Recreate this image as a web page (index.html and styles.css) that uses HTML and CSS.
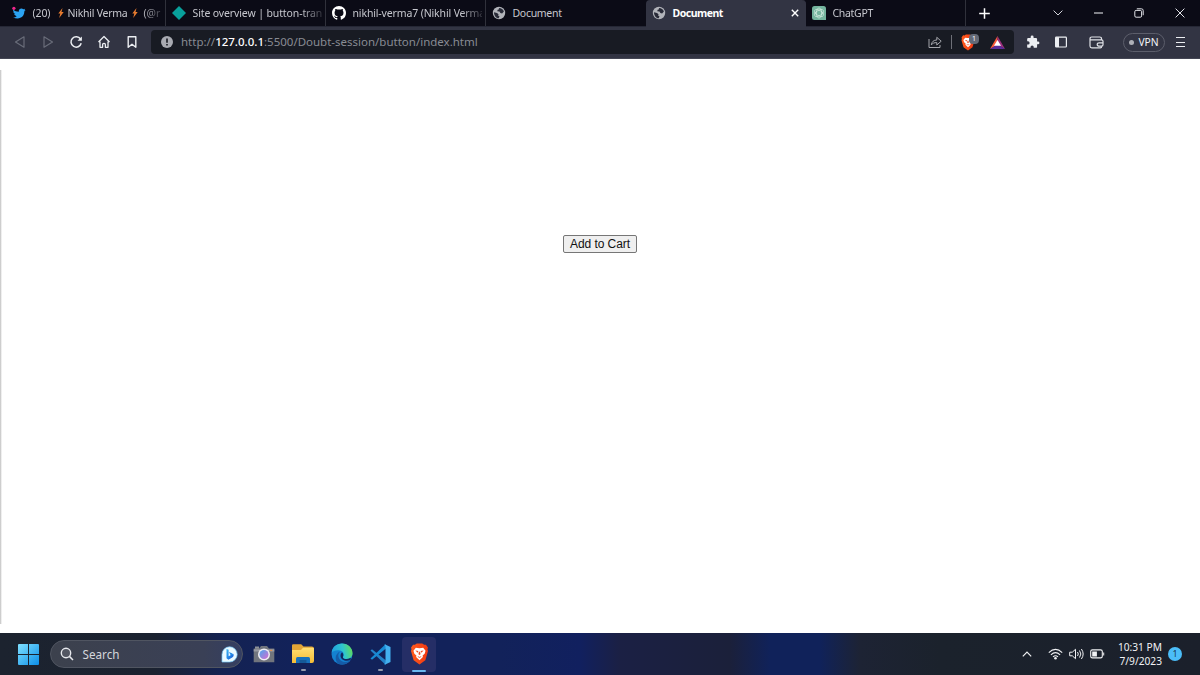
FILE: index.html
```html
<!DOCTYPE html>
<html lang="en">
<head>
<meta charset="utf-8">
<title>Document</title>
<link rel="stylesheet" href="styles.css">
</head>
<body>
<svg class="defs" width="0" height="0">
  <defs>
    <linearGradient id="orange" x1="0" y1="0" x2="1" y2="0"><stop offset="0" stop-color="#ff5a1c"/><stop offset="1" stop-color="#f03812"/></linearGradient>
    <linearGradient id="win" x1="0" y1="0" x2="1" y2="1"><stop offset="0" stop-color="#7fe0ff"/><stop offset="1" stop-color="#0c8ee8"/></linearGradient>
    <linearGradient id="edgeg" x1="0" y1=".5" x2="1" y2=".3"><stop offset="0" stop-color="#1f9fe0"/><stop offset=".55" stop-color="#2ec5cf"/><stop offset="1" stop-color="#62dc55"/></linearGradient>
    <linearGradient id="folder" x1="0" y1="0" x2="0" y2="1"><stop offset="0" stop-color="#ffdf72"/><stop offset="1" stop-color="#f5bc35"/></linearGradient>
    <linearGradient id="lens" x1="0" y1="0" x2="1" y2="1"><stop offset="0" stop-color="#4ba8ee"/><stop offset="1" stop-color="#d86bd0"/></linearGradient>
    <linearGradient id="bing" x1="0" y1="0" x2="1" y2="1"><stop offset="0" stop-color="#38b7f5"/><stop offset="1" stop-color="#1558d6"/></linearGradient>
    <symbol id="globe" viewBox="0 0 14 14"><circle cx="7" cy="7" r="6.200" fill="#b2b4ba"/><path d="M2 6.200l3 .8 1.500 1.300-.3 1.500 1.300.5-.8 2C3.900 12 2 9.500 2 6.200zM6.800 1.900c2.300-.1 4.400 1.300 5.100 3.500l-1.800 2-1.700-.3-.9-1.600-2.200-.2.300-1.600 1.500-.4z" fill="#292b38"/></symbol>
    <symbol id="brave" viewBox="0 0 20 24"><path d="M5 2 7 .5h6L15 2l2-.2L19.200 5l-.5 2 .6 1.800-2.900 10.100L10 23.500 3.600 18.900.7 8.800 1.300 7 .8 5 3 1.800z" fill="url(#orange)"/><path d="M6 5.200 10 5.700l4-.5 2.600 3.300-1 3.200-2.200 1.900.3 1.600L10 18.700l-3.700-3.500.3-1.600-2.200-1.900-1-3.200z" fill="#fff"/><path d="M5.500 8.300l3.300.5-.8 1.700zM14.500 8.300l-3.300.5.8 1.700zM7.800 14.200l2.200 1.100 2.200-1.100-.8 1.300-1.400.6-1.400-.6zM9.300 9.500h1.400l.4 2.700-1.100.8-1.100-.8z" fill="#f04a20"/></symbol>
  </defs>
</svg>
<div class="screen">
  <header class="tabs">
    <div class="tab">
      <svg class="fav" viewBox="0 0 14 14"><path d="M1 3.200C2.800 5 4.500 5.700 6.800 5.700 6.500 2.800 9.500 1.600 11.400 3.300l1.800-.5-.9 1.500 1.300-.2-1.300 1.500C12.300 11 7.500 14.200 1 11.400c1.600 0 2.800-.3 3.700-1.200-1.300-.3-2.200-1-2.500-2.100h1.200C2 7.500 1.300 6.500 1.200 5.300l1 .2C1.100 4.800.7 4.100 1 3.200z" fill="#2ba3f2"/><circle cx="1.900" cy="2.300" r="1.600" fill="#f0268c"/></svg>
      <span class="title t1"><span class="num">(20)</span><svg class="bolt" viewBox="0 0 6 10"><path d="M4.500 0 .3 5.500h2L1.200 10l4.500-6H3.500z" fill="#e77b2f"/></svg><span class="name">Nikhil Verma</span><svg class="bolt" viewBox="0 0 6 10"><path d="M4.500 0 .3 5.500h2L1.200 10l4.500-6H3.500z" fill="#e77b2f"/></svg><span class="handle">(@r</span></span>
    </div>
    <div class="tab"><svg class="fav" viewBox="0 0 14 14"><path d="M7 0l7 7-7 7-7-7z" fill="#08a09b"/></svg><span class="title t2">Site overview | button-trans</span></div>
    <div class="tab"><svg class="fav" viewBox="0 0 16 16"><path fill="#fff" d="M8 0C3.580 0 0 3.580 0 8c0 3.540 2.290 6.530 5.470 7.590.4.070.55-.17.55-.38v-1.490c-2.230.48-2.690-.95-2.690-.95-.36-.92-.9-1.170-.9-1.170-.72-.5.060-.48.060-.48.800.050 1.230.820 1.230.820.720 1.230 1.880.870 2.340.660.070-.52.280-.87.500-1.070-1.780-.2-3.640-.89-3.640-3.950 0-.87.310-1.590.820-2.150-.08-.2-.36-1.020.080-2.120 0 0 .67-.21 2.200.820a7.600 7.600 0 0 1 4 0c1.530-1.040 2.200-.82 2.200-.82.440 1.100.160 1.920.080 2.120.510.560.820 1.270.820 2.150 0 3.070-1.870 3.750-3.650 3.950.290.250.540.730.540 1.480v2.200c0 .21.150.46.550.38A8 8 0 0 0 16 8c0-4.420-3.580-8-8-8z"/></svg><span class="title t3">nikhil-verma7 (Nikhil Verma</span></div>
    <div class="tab plain"><svg class="fav"><use href="#globe"/></svg><span class="title t4">Document</span></div>
    <div class="tab active"><svg class="fav"><use href="#globe"/></svg><span class="title t5">Document</span><svg class="x" viewBox="0 0 8 8"><path d="M.8.800l6.400 6.400M7.200.8.8 7.200" stroke="#fff" stroke-width="1.400"/></svg></div>
    <div class="tab"><svg class="fav" viewBox="0 0 14 14"><path d="M2.500 0h9Q14 0 14 2.500V14H2.500Q0 14 0 11.500v-9Q0 0 2.500 0z" fill="#74b49e"/><g fill="none" stroke="#dff3e9" stroke-width=".6"><ellipse cx="7" cy="7" rx="2.600" ry="5"/><ellipse cx="7" cy="7" rx="2.600" ry="5" transform="rotate(60 7 7)"/><ellipse cx="7" cy="7" rx="2.600" ry="5" transform="rotate(120 7 7)"/></g></svg><span class="title t6">ChatGPT</span></div>
    <div class="plus"><svg width="11" height="11" viewBox="0 0 11 11"><path d="M5.500.2v10.600M.2 5.500h10.600" stroke="#fff" stroke-width="1.500"/></svg></div>
    <div class="controls">
      <span><svg width="10" height="6" viewBox="0 0 10 6"><path d="M.6.600 5 5 9.400.6" fill="none" stroke="#d5d6dc"/></svg></span>
      <span><svg width="9" height="2" viewBox="0 0 9 2"><path d="M0 1h9" stroke="#e2e3e8" stroke-width="1.100"/></svg></span>
      <span><svg width="10" height="10" viewBox="0 0 10 10"><g fill="none" stroke="#e2e3e8"><rect x=".8" y="2.400" width="6.800" height="6.800" rx="1.300"/><path d="M2.800.800h4.600Q9.200.8 9.200 2.600v4.600"/></g></svg></span>
      <span><svg width="10" height="10" viewBox="0 0 10 10"><path d="M.6.600l8.800 8.800M9.400.6.6 9.400" stroke="#e2e3e8"/></svg></span>
    </div>
  </header>

  <nav class="toolbar">
    <div class="navs">
      <span><svg width="14" height="14" viewBox="0 0 14 14"><path d="M11 1.800v10.400L2.500 7z" fill="none" stroke="#696c79" stroke-width="1.200" stroke-linejoin="round"/></svg></span>
      <span><svg width="14" height="14" viewBox="0 0 14 14"><path d="M3 1.800v10.400L11.500 7z" fill="none" stroke="#696c79" stroke-width="1.200" stroke-linejoin="round"/></svg></span>
      <span><svg width="14" height="14" viewBox="0 0 14 14"><path d="M11.500 4A5.200 5.200 0 1 0 12.200 8.300" fill="none" stroke="#eceef2" stroke-width="1.500"/><path d="M12.900 1.400v4.400H8.500z" fill="#eceef2"/></svg></span>
      <span><svg width="14" height="14" viewBox="0 0 14 14"><path d="M1.500 7 7 1.500 12.500 7M3 6.500v5.800h2.600V9.800Q5.600 8.300 7 8.300t1.400 1.500v2.500H11V6.500" fill="none" stroke="#eceef2" stroke-width="1.300" stroke-linejoin="round"/></svg></span>
      <span><svg width="14" height="14" viewBox="0 0 14 14"><path d="M3.200 1.700h7.600v10.600L7 9.300l-3.800 3z" fill="none" stroke="#eceef2" stroke-width="1.400" stroke-linejoin="round"/></svg></span>
    </div>
    <div class="address">
      <svg class="info" width="12" height="12" viewBox="0 0 12 12"><circle cx="6" cy="6" r="6" fill="#a9abb2"/><path d="M6 2.500v4.200M6 8v1.500" stroke="#20222a" stroke-width="1.700"/></svg>
      <span class="url">http://<b>127.0.0.1</b>:5500/Doubt-session/button/index.html</span>
      <svg class="share" width="14" height="14" viewBox="0 0 14 14"><path d="M1 4v8.500h11V10M3.300 9.900C3.800 6.700 5.700 5 8.800 5V2.300L13.200 6.200 8.800 10V7.600C6.300 7.500 4.600 8.200 3.300 9.900z" fill="none" stroke="#a4a6ac" stroke-linejoin="round"/></svg>
      <i class="rule"></i>
      <span class="shield"><svg width="14" height="17"><use href="#brave"/></svg><em>1</em></span>
      <svg class="bat" width="15" height="13" viewBox="0 0 15 13"><path d="M7.500 0 0 13l7.500-4.300z" fill="#fa5a38"/><path d="M7.500 0 15 13 7.500 8.700z" fill="#9b2e7d"/><path d="M0 13h15L7.500 8.300z" fill="#592d9a"/><path d="M7.500 4 11 9.700H4z" fill="#fff"/></svg>
    </div>
    <div class="tool ext"><svg width="14" height="14" viewBox="0 0 24 24"><path d="M20.500 11H19V7a2 2 0 0 0-2-2h-4V3.500a2.500 2.500 0 0 0-5 0V5H4a2 2 0 0 0-2 2v3.800h1.500a2.700 2.700 0 0 1 0 5.400H2V20a2 2 0 0 0 2 2h3.800v-1.500a2.700 2.700 0 0 1 5.400 0V22H17a2 2 0 0 0 2-2v-4h1.500a2.500 2.500 0 0 0 0-5z" fill="#eceef2"/></svg></div>
    <div class="tool"><svg width="12" height="12" viewBox="0 0 12 12"><rect x=".6" y="1.200" width="10.800" height="9.800" rx=".8" fill="none" stroke="#eceef2" stroke-width="1.200"/><path d="M.8 1.200h3.200V11H.8z" fill="#eceef2"/></svg></div>
    <div class="tool wallet"><svg width="15" height="13" viewBox="0 0 15 13"><g fill="none" stroke="#e0e2e7" stroke-width="1.200"><path d="M12.500 4V2.800Q12.500 1 10.700 1H2.800Q1 1 1 2.800V10q0 1.800 1.800 1.800h8.500q1.400 0 1.400-1.600"/><path d="M1 3.800h11.500q1.500 0 1.500 1.500v3.400q0 1.400-1.500 1.400h-2.300q-2 0-2-1.600t2-1.600h3.600"/></g></svg></div>
    <div class="vpn"><i></i><span>VPN</span></div>
    <div class="menu"><i></i><i></i><i></i></div>
  </nav>

  <main class="page"><button class="cart" type="button">Add to Cart</button></main>

  <footer class="taskbar">
    <svg class="start" width="21" height="21" viewBox="0 0 21 21"><path d="M0 1q0-1 1-1h9v10H0zM11 0h9q1 0 1 1v9H11zM0 11h10v10H1q-1 0-1-1zM11 11h10v9q0 1-1 1h-9z" fill="url(#win)"/></svg>
    <div class="search">
      <svg width="14" height="14" viewBox="0 0 14 14"><circle cx="6" cy="6" r="4.700" fill="#535763" stroke="#e6e8ed" stroke-width="1.400"/><path d="M9.400 9.400 13 13" stroke="#e6e8ed" stroke-width="1.500"/></svg>
      <span>Search</span>
      <svg class="bing" width="17" height="17" viewBox="0 0 17 17"><path d="M1 16V8.500A7.600 7.600 0 1 1 8.500 16z" fill="#eafaff" stroke="#75c9fa" stroke-width=".7"/><path d="M5.500 3l2.100.8v6.500l4.600-2.500c1 1.500.3 3-1 3.800l-3.800 2.100-1.900-1.500z" fill="url(#bing)"/><path d="M7.900 6l3.100 1.300q1 .5 1.200 1.600L9.600 9z" fill="#268ce6"/></svg>
    </div>
    <div class="apps">
      <span class="app"><svg width="22" height="20" viewBox="0 0 22 20"><path d="M2 2.500h4V5H2z" fill="#8c9097"/><path d="M.7 4.500H6L8 2h6l2 2.500h5.300v13.800H.7z" fill="#71757d"/><path d="M.7 5.300h20.600v2.200H.7z" fill="#989ba2"/><circle cx="11" cy="10.500" r="6" fill="#f0eff4"/><circle cx="11" cy="10.500" r="4.500" fill="url(#lens)"/><path d="M17.200 5.800h2v1h-2z" fill="#f28b37"/></svg></span>
      <span class="app open"><svg width="22" height="20" viewBox="0 0 22 20"><path d="M0 1.500Q0 .3 1.200.3h8L11.500 2.500h8.300q2.200 0 2.200 2V9H0z" fill="#e2a536"/><path d="M0 6h9l2-2.200h10q1 0 1 1V17q0 2-2 2H0z" fill="url(#folder)"/><path d="M4 19v-4.500Q4 13 5.500 13h11q1.500 0 1.500 1.500V19z" fill="#1772bd"/><path d="M7.500 16h7v3h-7z" fill="#155a98"/></svg></span>
      <span class="app"><svg width="22" height="22" viewBox="0 0 22 22"><circle cx="11" cy="11" r="10.500" fill="#1482d1"/><path d="M.6 10C1 4 5.500.5 11 .5c6.500 0 10.500 5 10.500 9.500 0 4-3 6-6.200 6-3 0-4-1.200-3.300-2.300 1.700-2.600.2-5.700-3.200-6.200C5 7 1.800 8 .6 10z" fill="url(#edgeg)"/><path d="M10 8.300c-4 1.700-3.300 7.500.5 9.700 3 1.800 6.300 1 9.200-.9-3 4.400-8.100 5.700-12.400 3.600C3 17 4 10 10 8.300z" fill="#155ca8"/><path d="M12 13.700c-.8 2.200 4 3.300 7.300 1.200l.8.700-.8 1.500c-4.300 1.600-9.500.1-9.800-4.100 0-1.700.8-3 1.500-3.700 1.400 1.300 1.700 3 1 4.400z" fill="#12265f"/></svg></span>
      <span class="app open"><svg width="21" height="21" viewBox="0 0 21 21"><path d="M.5 6.500 2 5.300l14 11.200v4L15 20.300z" fill="#2382c9"/><path d="M.5 14.500 2 15.700 16 4.500v-4L15 .7z" fill="#168bd5"/><path d="M15.200.4 20.500 3v15l-5.300 2.600-1-.4 1.300-1.500V2.300L14.200.8z" fill="#43b0ef"/></svg></span>
      <span class="app current"><svg width="19" height="22"><use href="#brave"/></svg></span>
    </div>
    <div class="tray">
      <svg class="up" width="10" height="6" viewBox="0 0 10 6"><path d="M.8 5.300 5 1.100l4.200 4.200" fill="none" stroke="#f1f2f4" stroke-width="1.200"/></svg>
      <svg class="wifi" width="15" height="12" viewBox="0 0 15 12"><g fill="none" stroke="#f1f2f4" stroke-width="1.100"><path d="M.8 4.700Q7.500-1.900 14.200 4.700M2.900 6.800q4.600-4.400 9.200 0M5 8.900q2.500-2.200 5 0"/></g><circle cx="7.500" cy="10.300" r="1.300" fill="#f1f2f4"/></svg>
      <svg class="vol" width="15" height="12" viewBox="0 0 15 12"><g fill="none" stroke="#f1f2f4"><path d="M.7 4.200h2.600L6.500 1.300v9.400L3.300 7.800H.7z" stroke-linejoin="round"/><path d="M8.500 4q1.600 2 0 4M10.500 2.500q2.700 3.500 0 7M12.400 1q3.500 5 0 10"/></g></svg>
      <svg class="batt" width="15" height="10" viewBox="0 0 15 10"><rect x=".7" y=".9" width="11.600" height="8" rx="1.700" fill="none" stroke="#f1f2f4" stroke-width="1.100"/><path d="M2.200 2.400h4.700v5H2.200zM13.200 3.400h1v3h-1z" fill="#f1f2f4"/></svg>
      <div class="clock"><span>10:31 PM</span><span>7/9/2023</span></div>
      <b class="count">1</b>
    </div>
  </footer>
</div>
</body>
</html>
```

FILE: styles.css
```css
* { box-sizing: border-box; }
body { margin: 0; background: #fff; font-family: "Noto Sans", sans-serif; }
svg { display: block; flex: none; }
.defs { position: absolute; }
.screen { width: 1200px; height: 675px; display: flex; flex-direction: column; overflow: hidden; }

.tabs { height: 27px; flex: none; display: flex; padding-left: 5.5px; background: #0b0b16; border-bottom: 1px solid #252735; color: #c6c7ce; font-size: 10.5px; }
.tab { width: 160px; height: 26px; flex: none; display: flex; align-items: center; padding: 0 3px 0 6px; border-right: 1px solid #30313b; }
.tab.plain { border-color: transparent; }
.tab.active { height: 27px; background: #323443; border-color: #323443; border-radius: 4px 4px 0 0; color: #fff; font-weight: 700; padding: 0 6px 1px; }
.fav { width: 14px; height: 14px; margin-right: 7px; }
.title { flex: 1; min-width: 0; white-space: nowrap; line-height: 20px; letter-spacing: -.3px; mask-image: linear-gradient(to right, #000 84%, rgba(0, 0, 0, .2)); }
.title.t1 { letter-spacing: -.1px; }
.title.t2 { letter-spacing: -.12px; }
.title.t3 { letter-spacing: -.14px; }
.title.t5 { letter-spacing: -.5px; }
.plain .title, .active .title { mask-image: none; }
.t1 { display: flex; align-items: center; }
.bolt { width: 6px; height: 10px; }
.num { width: 25px; }
.name { width: 63px; margin: 0 1px 0 4px; }
.name { letter-spacing: -.25px; }
.t1 .bolt + .handle { margin-left: 6px; }
.x { width: 8px; height: 8px; }
.plus { width: 39px; display: flex; align-items: center; justify-content: center; }
.controls { display: grid; grid-template-columns: repeat(4, 40.5px); margin-left: 34px; }
.controls span, .navs span, .tool { display: flex; align-items: center; justify-content: center; }

.toolbar { height: 32px; flex: none; display: flex; align-items: center; padding: 0 0 1px 5px; background: #323443; border-bottom: 1px solid #444654; }
.navs { display: grid; grid-template-columns: repeat(5, 28px); width: 146px; padding-left: .5px; }
.address { width: 863px; height: 24px; display: flex; align-items: center; padding: 0 9px 0 10px; background: #181b23; border-radius: 4px; }
.url { margin-left: 8px; flex: 1; color: #888b93; font-size: 11.5px; line-height: 20px; white-space: nowrap; }
.url b { color: #fff; font-weight: 500; }
.rule { width: 1px; height: 14px; margin: 0 9px; background: #6e7078; }
.shield { position: relative; margin-right: 15px; }
.shield em { position: absolute; left: 8px; top: 0; width: 10px; height: 10px; border-radius: 4px; background: #636a77; color: #fff; font: 7px/10px "Noto Sans", sans-serif; text-align: center; }
.tool { width: 28px; }
.ext { margin-left: 5px; }
.wallet { margin-left: 7px; }
.vpn { width: 42px; height: 19px; margin-left: 13px; display: flex; align-items: center; justify-content: center; gap: 4px; border: 1px solid #5c5e6b; border-radius: 10px; color: #f3f4f7; font-size: 10.3px; }
.vpn i { width: 5px; height: 5px; border-radius: 50%; background: #aeb0b7; }
.menu { width: 9px; height: 10px; margin-left: 11px; display: flex; flex-direction: column; justify-content: space-between; }
.menu i { height: 1px; background: #eceef2; }

.page { height: 574px; flex: none; display: flex; justify-content: center; align-items: flex-start; padding-top: 176px; background: linear-gradient(to right, #bdbdbd, #fff) 0 11px / 2px 554px no-repeat #fff; }
.cart { width: 74px; height: 18px; padding: 0; border: 1px solid #767676; border-radius: 2px; background: #efefef; color: #111; font: 12px/15px "Liberation Sans", Arial, sans-serif; letter-spacing: -.05px; }

.taskbar { height: 42px; flex: none; display: flex; align-items: center; padding-left: 18px; background: linear-gradient(90deg, #1c232f 0, #1b2230 155px, #142253 225px, #12225a 300px, #12225a 500px, #11205f 580px, #1b2044 620px, #1b203a 730px, #10225a 770px, #10225a 820px, #1d2334 860px, #1b222c 940px, #1b202b 1200px); color: #f1f2f4; }
.search { width: 193px; height: 28px; margin-left: 11px; display: flex; align-items: center; padding: 0 4px 0 9px; border: 1px solid #505561; border-radius: 14px; background: linear-gradient(90deg, #3c414d, #3a4056 80%, #343e62); font-size: 11.700px; color: #d5d7dc; }
.search span { flex: 1; margin-left: 8.500px; }
.apps { display: grid; grid-template-columns: repeat(5, 38.7px); margin-left: 2px; }
.app { position: relative; height: 35px; display: flex; align-items: center; justify-content: center; }
.open::after, .current::after { content: ""; position: absolute; bottom: 1px; width: 5px; height: 2px; border-radius: 1px; background: #969cae; }
.current { background: #252e66; border-radius: 4px; margin: 0 2px; }
.current::after { width: 14px; bottom: 0; background: #69b8f0; }
.tray { margin-left: auto; padding-right: 18px; display: flex; align-items: center; }
.wifi { margin-left: 16px; }
.vol { margin-left: 6px; }
.batt { margin-left: 6px; }
.clock { width: 57px; display: flex; flex-direction: column; align-items: flex-end; font-size: 10.200px; line-height: 14px; white-space: nowrap; }
.count { width: 14px; height: 14px; margin-left: 6px; border-radius: 50%; background: #4bbdf8; color: #183a51; font-size: 9px; line-height: 14px; font-weight: 400; text-align: center; }
```
